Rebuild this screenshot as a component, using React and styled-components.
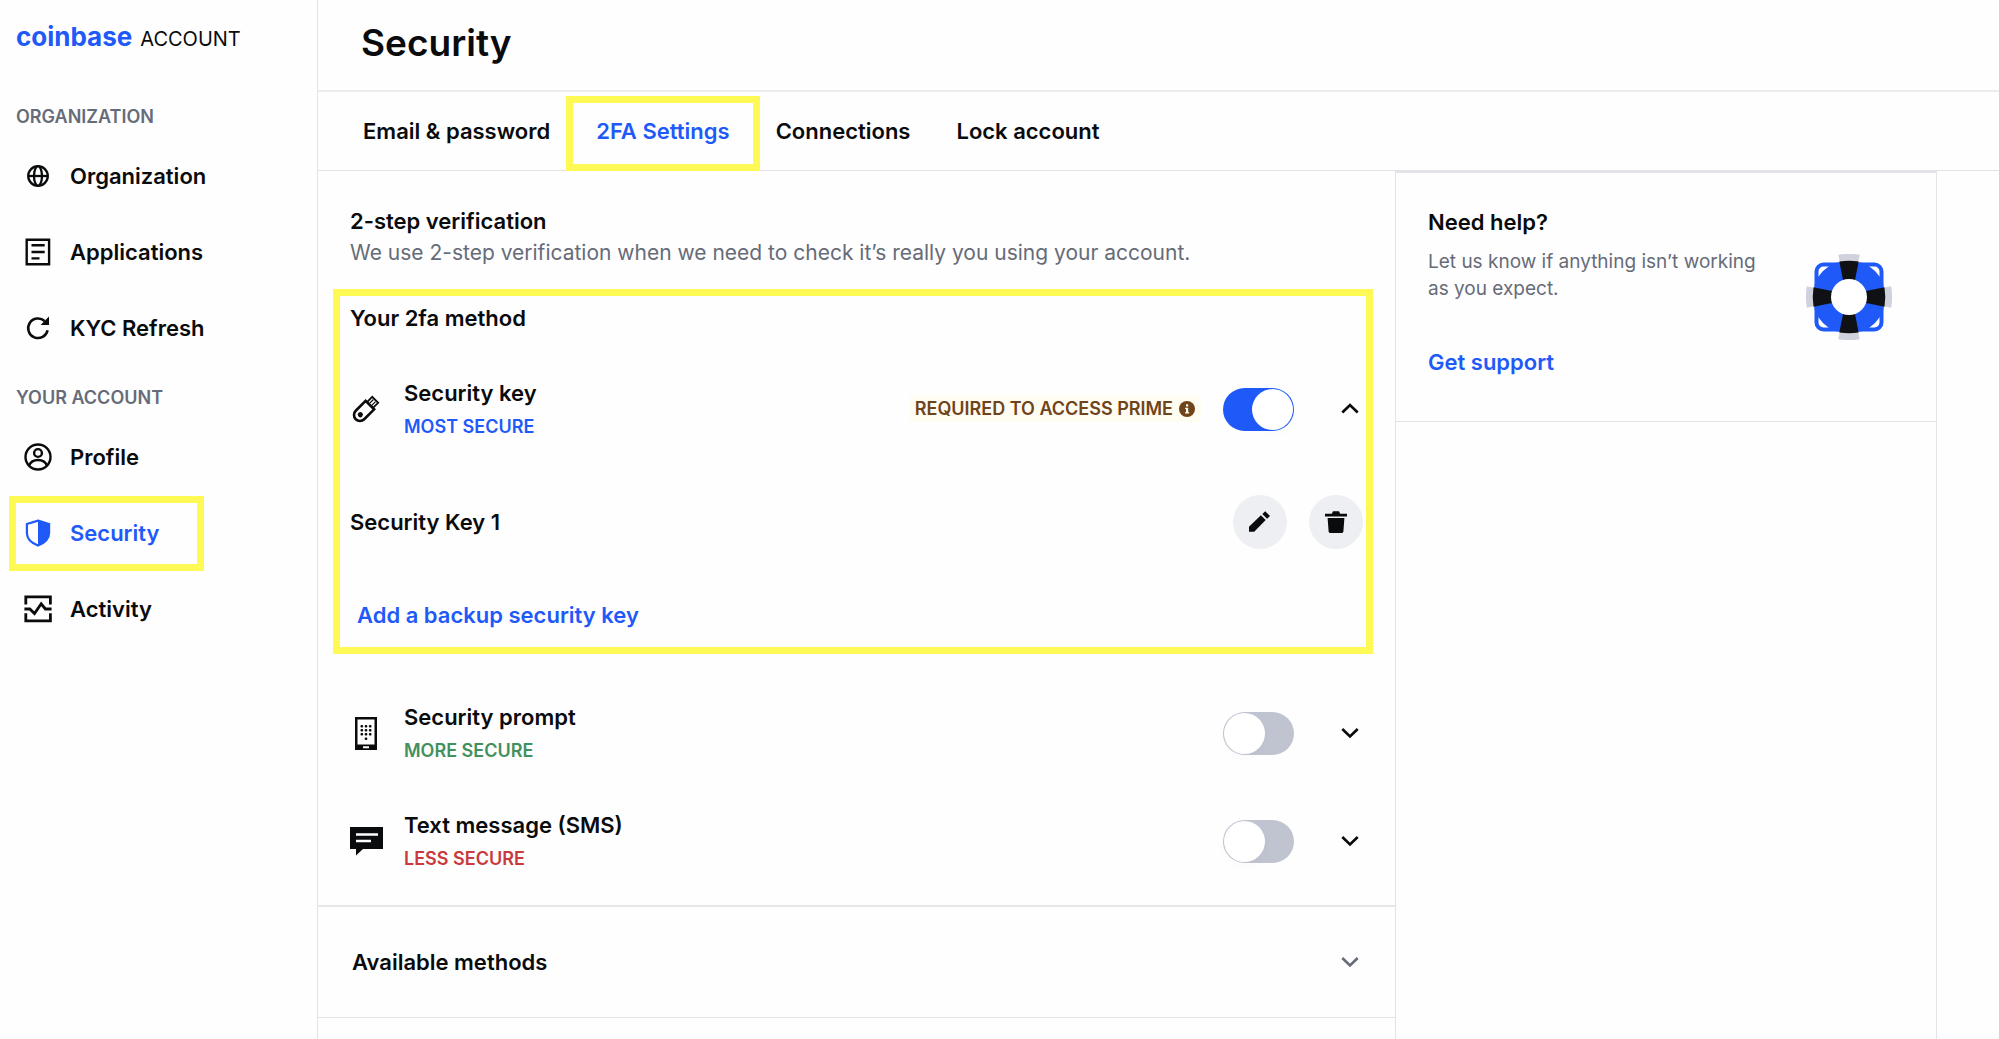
import React, { useState } from "react";
import styled, { createGlobalStyle, css } from "styled-components";

const color = {
  ink: "#0a0b0d",
  muted: "#666b78",
  blue: "#1f5af9",
  green: "#43905f",
  red: "#c9393d",
  brown: "#70441b",
  cream: "#fffcf1",
  line: "#e2e3e6",
  off: "#bfc4d0",
  chip: "#eeeff3",
  mark: "#fff955",
  page: "#fefefe",
};

const GlobalStyle = createGlobalStyle`
  *, *::before, *::after { box-sizing: border-box; }
  body {
    margin: 0;
    background: ${color.page};
    color: ${color.ink};
    font-family: Inter, "Liberation Sans", sans-serif;
    font-size: 22px;
    line-height: 32px;
  }
  h1, h2, h3, p, ul { margin: 0; padding: 0; }
  ul { list-style: none; }
  a { color: inherit; text-decoration: none; }
  button {
    margin: 0; padding: 0; border: 0; background: none;
    color: inherit; font: inherit; cursor: pointer;
  }
  svg { display: block; flex: none; }
`;

const highlight = css`
  position: relative;
  &::after {
    content: "";
    position: absolute;
    border: 7px solid ${color.mark};
    pointer-events: none;
  }
`;

const Page = styled.div`
  display: flex;
  min-height: 100vh;
`;

const Sidebar = styled.aside`
  flex: none;
  width: 318px;
  border-right: 1px solid ${color.line};
`;

const Brand = styled.a`
  display: flex;
  align-items: baseline;
  gap: 8px;
  height: 85px;
  padding: 21px 16px 0;
  font-size: 20px;
`;

const Wordmark = styled.span`
  color: ${color.blue};
  font-size: 26px;
  font-weight: 700;
`;

const GroupTitle = styled.h2`
  margin: 20px 16px 9px;
  color: ${color.muted};
  font-size: 18px;
  font-weight: 600;
  line-height: 24px;
  text-transform: uppercase;
`;

const NavLink = styled.a`
  display: flex;
  align-items: center;
  gap: 17px;
  width: 213px;
  height: 76px;
  padding-left: 23px;
  font-weight: 600;
  ${(p) =>
    p.$active &&
    css`
      color: ${color.blue};
      ${highlight}
      &::after { inset: 1px 9px 0; }
    `}
`;

const Content = styled.main`
  flex: 1;
  min-width: 0;
  display: flex;
  flex-direction: column;
`;

const Header = styled.header`
  height: 92px;
  padding: 20px 43px 0;
  border-bottom: 2px solid #ebecee;
`;

const PageTitle = styled.h1`
  font-size: 37px;
  font-weight: 600;
  line-height: 46px;
`;

const Tabs = styled.nav`
  display: flex;
  gap: 46px;
  height: 79px;
  padding: 0 45px;
  border-bottom: 1px solid ${color.line};
`;

const Tab = styled.a`
  display: flex;
  align-items: center;
  font-weight: 600;
  white-space: nowrap;
  ${(p) =>
    p.$active &&
    css`
      color: ${color.blue};
      ${highlight}
      &::after { inset: 4px -30px -1px; }
    `}
`;

const Columns = styled.div`
  flex: 1;
  display: grid;
  grid-template-columns: minmax(0, 1fr) 542px;
  padding-right: 62px;
`;

const Primary = styled.div`
  min-width: 0;
`;

const Methods = styled.section`
  padding: 34px 32px 10px;
  border-bottom: 2px solid #e6e7e9;
`;

const SectionTitle = styled.h2`
  font-size: 22px;
  font-weight: 600;
  line-height: 32px;
`;

const Lead = styled.p`
  color: ${color.muted};
  font-size: 21px;
`;

const Current = styled.section`
  margin: 33px 0 32px;
  ${highlight}
  &::after { inset: -13px -10px -7px -17px; }
`;

const CurrentTitle = styled(SectionTitle)`
  margin-bottom: 21px;
`;

const Row = styled.div`
  display: flex;
  align-items: center;
  height: 108px;
`;

const RowIcon = styled.div`
  display: grid;
  place-items: center;
  width: 32px;
  margin-right: 22px;
`;

const RowText = styled.div`
  flex: 1;
  padding-top: 2px;
`;

const RowTitle = styled.label`
  display: block;
  font-weight: 600;
  line-height: 34px;
`;

const Level = styled.p`
  color: ${(p) => p.$color};
  font-size: 18px;
  font-weight: 600;
  line-height: 34px;
  text-transform: uppercase;
`;

const Badge = styled.span`
  display: flex;
  align-items: center;
  gap: 6px;
  height: 26px;
  margin-right: 22px;
  padding: 0 6px;
  border-radius: 4px;
  background: ${color.cream};
  color: ${color.brown};
  font-size: 18px;
  font-weight: 600;
  line-height: 26px;
  white-space: nowrap;
`;

const Switch = styled.input`
  appearance: none;
  flex: none;
  width: 71px;
  height: 43px;
  margin: 0 43px 0 0;
  padding: 1px;
  border-radius: 22px;
  background: ${color.off};
  cursor: pointer;
  &::before {
    content: "";
    display: block;
    width: 41px;
    height: 41px;
    border-radius: 50%;
    background: #fff;
    box-shadow: 0 4px 12px rgba(0, 0, 0, 0.02);
  }
  &:checked { background: ${color.blue}; }
  &:checked::before { margin-left: auto; }
`;

const Expander = styled.button`
  display: grid;
  place-items: center;
  width: 26px;
  height: 32px;
`;

const KeyRow = styled.div`
  display: flex;
  align-items: center;
  gap: 22px;
  height: 118px;
`;

const KeyName = styled.h3`
  flex: 1;
  font-size: 22px;
  font-weight: 600;
`;

const RoundButton = styled.button`
  display: grid;
  place-items: center;
  width: 54px;
  height: 54px;
  border-radius: 50%;
  background: ${color.chip};
`;

const ActionLink = styled.a`
  display: inline-block;
  color: ${color.blue};
  font-weight: 600;
`;

const AddKey = styled.div`
  padding: 18px 7px 16px;
`;

const Available = styled.button`
  display: flex;
  align-items: center;
  justify-content: space-between;
  width: 100%;
  height: 111px;
  padding: 0 36px 0 34px;
  border-bottom: 1px solid ${color.line};
  font-weight: 600;
`;

const Muted = styled.span`
  color: ${color.muted};
`;

const Secondary = styled.aside`
  border: solid ${color.line};
  border-width: 2px 1px 0;
`;

const Help = styled.section`
  display: flex;
  justify-content: space-between;
  height: 249px;
  padding: 33px 44px 0 32px;
  border-bottom: 1px solid ${color.line};
`;

const HelpText = styled.p`
  max-width: 340px;
  margin: 10px 0 44px;
  color: ${color.muted};
  font-size: 19px;
  line-height: 27px;
`;

const Buoy = styled.div`
  padding-top: 48px;
`;

const iconProps = { width: 30, height: 30, viewBox: "0 0 30 30", fill: "none", "aria-hidden": true };

const GlobeIcon = () => (
  <svg {...iconProps} stroke="currentColor" strokeWidth="2.3">
    <circle cx="15" cy="15" r="9.800" />
    <ellipse cx="15" cy="15" rx="4" ry="9.800" />
    <path d="M5 15h20" />
  </svg>
);

const DocumentIcon = () => (
  <svg {...iconProps} stroke="currentColor" strokeWidth="2.4">
    <path d="M3.7 2.7h22.4v24.6H3.7z" />
    <path d="M8.5 8.2h13.2M8.5 15h13.2M8.5 21.4h8" />
  </svg>
);

const RefreshIcon = () => (
  <svg {...iconProps}>
    <path d="M24.600 17.200A9.800 9.800 0 1 1 21.600 8" stroke="currentColor" strokeWidth="2.5" />
    <path d="M26 3.6v8.4h-8.400z" fill="currentColor" />
  </svg>
);

const ProfileIcon = () => (
  <svg {...iconProps} stroke="currentColor" strokeWidth="2.4">
    <circle cx="15" cy="15" r="12.5" />
    <circle cx="15" cy="11" r="3.9" />
    <path d="M6 23.4c1.6-3.7 4.800-5.400 9-5.400s7.400 1.700 9 5.400" />
  </svg>
);

const ShieldIcon = () => (
  <svg {...iconProps}>
    <path d="M15 2.600 26.100 6v9c0 6-4.600 10-11.100 12.600C8.500 25 3.900 21 3.900 15V6z" stroke="currentColor" strokeWidth="2.2" />
    <path d="M15 2.600 26.100 6v9c0 6-4.600 10-11.100 12.600z" fill="currentColor" />
  </svg>
);

const ActivityIcon = () => (
  <svg {...iconProps} stroke="currentColor" strokeWidth="2.800">
    <path d="M2.800 10.400V2.900h24.600v7.500M2.800 19.300v7.500h24.600v-7.500" />
    <path d="M1.400 15h5.400l4.700 4.600 6.700-9.800 4.200 5.200h6.200" strokeWidth="2.800" />
  </svg>
);

const UsbIcon = () => (
  <svg {...iconProps} stroke="currentColor">
    <g transform="rotate(45 15 15)">
      <path d="M9 9.500h12v14a6 6 0 0 1-12 0z" strokeWidth="2.600" />
      <path d="M10.800 9V2h8.400v7" strokeWidth="1.800" />
      <path d="M13.500 3v6M16.500 3v6" strokeWidth="1.200" />
      <circle cx="15" cy="23" r="2.600" fill="currentColor" stroke="none" />
    </g>
  </svg>
);

const PhoneIcon = () => (
  <svg width="22" height="33" viewBox="0 1 22 33" fill="currentColor" aria-hidden="true">
    <path fillRule="evenodd" d="M0 1h22v33H0zM2.500 3.500v25h17v-25zM8 30.300v2h6v-2z" />
    {[9, 13, 17].map((y) =>
      [5.500, 9.700, 13.900].map((x) => <rect key={`${x}-${y}`} x={x} y={y} width="2.600" height="2.600" rx="1" />)
    )}
    <rect x="9.700" y="21.400" width="2.600" height="2.600" rx="1" />
  </svg>
);

const MessageIcon = () => (
  <svg width="33" height="30" viewBox="0 0 33 30" aria-hidden="true">
    <path d="M0 1h33v22H13l-7 6.500V23H0z" fill="currentColor" />
    <path d="M6 8.500h22M6 15h15" stroke="#fff" strokeWidth="2.600" />
  </svg>
);

const InfoIcon = () => (
  <svg width="16" height="16" viewBox="0 0 16 16" aria-hidden="true">
    <circle cx="8" cy="8" r="8" fill="currentColor" />
    <path d="M7 3.200h2.200v2.200H7zM6 6.700h3.200v4.500h1v1.300H6v-1.300h1V8H6z" fill={color.cream} />
  </svg>
);

const Chevron = ({ up }) => (
  <svg width="18" height="12" viewBox="0 0 18 12" fill="none" stroke="currentColor" strokeWidth="2.700" aria-hidden="true">
    <path d={up ? "M1.300 9.500 9 2.100 16.700 9.500" : "M1.300 2 9 9.400 16.700 2"} />
  </svg>
);

const PencilIcon = () => (
  <svg width="22" height="22" viewBox="0 0 22 22" fill="currentColor" aria-hidden="true">
    <path d="M0 20.800v-5L11.900 4.200l4.800 4.700L5.200 20.800zM13.300 3 16.200.200l4.800 4.700-2.900 2.800z" />
  </svg>
);

const TrashIcon = () => (
  <svg width="22" height="22" viewBox="0 0 22 22" fill="currentColor" aria-hidden="true">
    <path d="M0 2.700h6.800L8 .200h6l1.200 2.500H22v2.800H0zM2.600 7h16.800l-1 13.200c-.1 1.100-.8 1.800-1.900 1.800h-11c-1.100 0-1.800-.7-1.900-1.800z" />
  </svg>
);

const LifebuoyIcon = () => (
  <svg width="86" height="86" viewBox="0 0 86 86" fill="none" aria-hidden="true">
    <clipPath id="buoy-frame">
      <rect x="8.500" y="8.500" width="69" height="69" rx="9" />
    </clipPath>
    <rect x="10.500" y="10.500" width="65" height="65" rx="7" fill="#fff" stroke={color.blue} strokeWidth="4" />
    <circle cx="43" cy="43" r="36.800" fill={color.blue} clipPath="url(#buoy-frame)" />
    {[0, 90, 180, 270].map((angle) => (
      <g key={angle} transform={`rotate(${angle} 43 43)`}>
        <path d="M32.300.800Q43-1 53.700.800L52 9H34z" fill="#cfd1dc" />
        <path d="M33.300 7.500Q43 6 52.700 7.500L49 26H37z" fill="#101115" />
      </g>
    ))}
    <circle cx="43" cy="43" r="18" fill="#fff" />
  </svg>
);

const navGroups = [
  {
    title: "Organization",
    items: [
      { label: "Organization", icon: GlobeIcon },
      { label: "Applications", icon: DocumentIcon },
      { label: "KYC Refresh", icon: RefreshIcon },
    ],
  },
  {
    title: "Your account",
    items: [
      { label: "Profile", icon: ProfileIcon },
      { label: "Security", icon: ShieldIcon, active: true },
      { label: "Activity", icon: ActivityIcon },
    ],
  },
];

const tabs = ["Email & password", "2FA Settings", "Connections", "Lock account"];

function MethodRow({ id, title, level, levelColor, icon: Icon, badge, initial = false, open = false }) {
  const [on, setOn] = useState(initial);
  return (
    <Row>
      <RowIcon><Icon /></RowIcon>
      <RowText>
        <RowTitle htmlFor={id}>{title}</RowTitle>
        <Level $color={levelColor}>{level}</Level>
      </RowText>
      {badge && <Badge>{badge}<InfoIcon /></Badge>}
      <Switch id={id} type="checkbox" role="switch" checked={on} onChange={() => setOn(!on)} />
      <Expander type="button" aria-expanded={open} aria-label={`${title} details`}>
        <Chevron up={open} />
      </Expander>
    </Row>
  );
}

export default function App() {
  return (
    <>
      <GlobalStyle />
      <Page>
        <Sidebar>
          <Brand href="#home"><Wordmark>coinbase</Wordmark> ACCOUNT</Brand>
          <nav>
            {navGroups.map((group) => (
              <section key={group.title}>
                <GroupTitle>{group.title}</GroupTitle>
                <ul>
                  {group.items.map(({ label, icon: Icon, active }) => (
                    <li key={label}>
                      <NavLink href={`#${label}`} $active={active} aria-current={active ? "page" : undefined}>
                        <Icon />
                        {label}
                      </NavLink>
                    </li>
                  ))}
                </ul>
              </section>
            ))}
          </nav>
        </Sidebar>
        <Content>
          <Header><PageTitle>Security</PageTitle></Header>
          <Tabs>
            {tabs.map((tab) => (
              <Tab key={tab} href="#tab" $active={tab === "2FA Settings"}>{tab}</Tab>
            ))}
          </Tabs>
          <Columns>
            <Primary>
              <Methods>
                <SectionTitle>2-step verification</SectionTitle>
                <Lead>We use 2-step verification when we need to check it’s really you using your account.</Lead>
                <Current>
                  <CurrentTitle>Your 2fa method</CurrentTitle>
                  <MethodRow
                    id="security-key" title="Security key" level="Most secure" levelColor={color.blue}
                    icon={UsbIcon} badge="REQUIRED TO ACCESS PRIME" initial open
                  />
                  <KeyRow>
                    <KeyName>Security Key 1</KeyName>
                    <RoundButton type="button" aria-label="Rename key"><PencilIcon /></RoundButton>
                    <RoundButton type="button" aria-label="Remove key"><TrashIcon /></RoundButton>
                  </KeyRow>
                  <AddKey><ActionLink href="#add-key">Add a backup security key</ActionLink></AddKey>
                </Current>
                <MethodRow
                  id="security-prompt" title="Security prompt" level="More secure" levelColor={color.green}
                  icon={PhoneIcon}
                />
                <MethodRow
                  id="text-message" title="Text message (SMS)" level="Less secure" levelColor={color.red}
                  icon={MessageIcon}
                />
              </Methods>
              <Available type="button">Available methods<Muted><Chevron /></Muted></Available>
            </Primary>
            <Secondary>
              <Help>
                <div>
                  <SectionTitle>Need help?</SectionTitle>
                  <HelpText>Let us know if anything isn’t working as you expect.</HelpText>
                  <ActionLink href="#support">Get support</ActionLink>
                </div>
                <Buoy><LifebuoyIcon /></Buoy>
              </Help>
            </Secondary>
          </Columns>
        </Content>
      </Page>
    </>
  );
}
